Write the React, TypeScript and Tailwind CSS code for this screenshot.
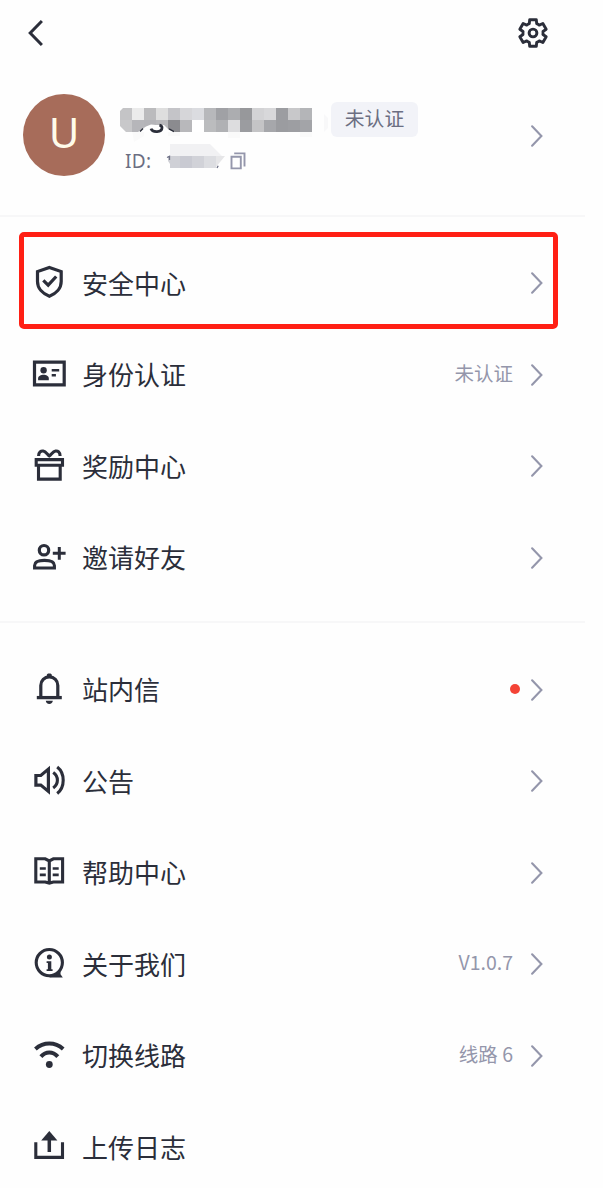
import type { ReactNode } from 'react';

const INK = '#2b2e3a';

function Glyph({ children }: { children: ReactNode }) {
  return (
    <svg width="36" height="36" viewBox="0 0 36 36" fill="none" stroke={INK} strokeWidth="3.2" className="block shrink-0">
      {children}
    </svg>
  );
}

const icons: Record<string, ReactNode> = {
  shield: (
    <>
      <path d="M18.4 2.4 30.2 6.6V16.5C30.2 23.5 25 28.8 18.4 31.2C11.8 28.8 6.5 23.5 6.5 16.5V6.6Z" />
      <path d="m12.3 15.3 4.9 4.8 8-8.6" />
    </>
  ),
  card: (
    <>
      <path d="M3.5 5.1H33.2V27.9H3.5Z" strokeWidth="3.2" />
      <circle cx="12.6" cy="13.2" r="3.2" fill={INK} stroke="none" />
      <path d="M7.1 23.2V21.4C7.1 19 10 17.8 12.6 17.8S17.8 19 17.8 21.4V23.2Z" fill={INK} stroke="none" />
      <path d="M20.7 13.2H28.2M20.7 18.2H24.9" strokeWidth="2.4" />
    </>
  ),
  gift: (
    <>
      <path d="M5.2 11.6H31.5V17.3H5.2Z" strokeWidth="3.1" />
      <path d="M7.5 17.4V31.1H29.2V17.4" strokeWidth="3.1" />
      <path d="M7.6 8C7.6 4.2 10 2.7 12.2 3C15 3.4 16.5 6.8 18.3 7.9C20.2 6.8 21.7 3.4 24.6 3C26.8 2.7 29.1 4.2 29.1 8" strokeWidth="3.1" />
    </>
  ),
  friend: (
    <>
      <circle cx="13" cy="10.2" r="4.7" />
      <path d="M3.6 28V25.4C3.6 21.7 8.5 20.4 13.4 20.4S23.4 21.7 23.4 25.4V28Z" strokeWidth="3.1" />
      <path d="M21.8 13.3H34.6M28.3 6.9V19.7" strokeWidth="3" />
    </>
  ),
  bell: (
    <>
      <path d="M9.8 25V13.4C9.8 8.5 13.4 4.9 18.3 4.9S26.8 8.5 26.8 13.4V25" />
      <path d="M5.8 25.6H30.8" strokeWidth="3.3" />
      <path d="M15.8 4.8V3C15.8 2 16.5 1.4 18.3 1.4S20.8 2 20.8 3V4.8Z" fill={INK} stroke="none" />
      <path d="M14.8 28.8H21.8C21.8 30.8 20.2 32 18.3 32S14.8 30.8 14.8 28.8Z" fill={INK} stroke="none" />
    </>
  ),
  speaker: (
    <>
      <path d="M4.9 12.5H9.8L17.4 6.1V28.4L9.8 22.1H4.9Z" strokeWidth="3.2" />
      <path d="M22.2 9.6C27.8 13.5 27.8 21 22.2 24.9M26.2 4C34.2 10.2 34.2 24.3 26.2 30.5" strokeWidth="3.1" />
    </>
  ),
  book: (
    <>
      <path d="M4.8 3.8H14.2L18.3 5.9L22.4 3.8H31.6V27H22.4L18.3 28.1L14.2 27H4.8ZM18.3 5.5V28.5" strokeWidth="3.1" />
      <path d="M8.8 13.5H14.8M8.8 19.8H14.8M21.7 13.5H27.7M21.7 19.8H27.7" strokeWidth="2.7" />
    </>
  ),
  info: (
    <>
      <circle cx="18.3" cy="16.6" r="13.1" strokeWidth="3.1" />
      <path d="M18 31.5H31.8L29.5 28.3V25.6L24.5 28.6Z" fill={INK} stroke="none" />
      <circle cx="18.4" cy="11" r="2.5" fill={INK} stroke="none" />
      <path d="M15.6 15.3H20.3V23.3H21.6V25H15.6V23.3H16.9V17H15.6Z" fill={INK} stroke="none" />
    </>
  ),
  wifi: (
    <>
      <path d="M4.4 10.9C12.6 3.6 24 3.6 32.2 10.9" strokeWidth="4" />
      <path d="M9.9 18.7C14.8 13.2 21.8 13.2 26.8 18.7" strokeWidth="4" />
      <circle cx="18.3" cy="26.5" r="3.4" fill={INK} stroke="none" />
    </>
  ),
  upload: (
    <>
      <path d="M4.8 13.3V28.4H31.5V13.3" strokeWidth="3.1" />
      <path d="M18.3 10V23" strokeWidth="3.5" />
      <path d="M18.3 2 26.4 11.4H10.2Z" fill={INK} stroke="none" />
    </>
  ),
};

function Chevron() {
  return (
    <svg width="16" height="24" viewBox="0 0 16 24" fill="none" stroke="#9496ab" strokeWidth="2.1" className="block shrink-0">
      <path d="M3.1 2.3 12.4 12 3.1 21.7" strokeLinecap="round" />
    </svg>
  );
}

const gearPath =
  Array.from({ length: 6 }, (_, k) => {
    const a = (k * Math.PI) / 3;
    const p = (x: number, y: number) =>
      `${(16 + x * Math.cos(a) - y * Math.sin(a)).toFixed(2)} ${(16 + x * Math.sin(a) + y * Math.cos(a)).toFixed(2)}`;
    return `${k ? 'L' : 'M'}${p(-3.7, -9.4)}L${p(-3.3, -13.3)}L${p(3.3, -13.3)}L${p(3.7, -9.4)}Q${p(5.1, -8.8)} ${p(6.2, -7.9)}`;
  }).join('') + 'Z';

type Item = { icon: string; label: string; note?: string; dot?: boolean; marked?: boolean; plain?: boolean };

function Row({ icon, label, note, dot, marked, plain }: Item) {
  return (
    <li className="relative flex h-[91.5px] items-center pl-[31px] pr-[40px]">
      <Glyph>{icons[icon]}</Glyph>
      <span className="relative -top-[0.5px] ml-[15px] text-[26px] leading-9 text-[#2b2e3a]">{label}</span>
      <span className="ml-auto flex items-center">
        {note && <span className="relative -top-[2px] mr-[16px] text-[19.5px] leading-7 text-[#9496ab]">{note}</span>}
        {dot && <span className="relative -top-px mr-[9px] size-[10px] rounded-full bg-[#f44336]" />}
        {!plain && <Chevron />}
      </span>
      {marked && (
        <span className="absolute left-[18.5px] top-[-6px] h-[97.5px] w-[539px] rounded-[5px] border-[5px] border-[#ff1f14]" />
      )}
    </li>
  );
}

const account: Item[] = [
  { icon: 'shield', label: '安全中心', marked: true },
  { icon: 'card', label: '身份认证', note: '未认证' },
  { icon: 'gift', label: '奖励中心' },
  { icon: 'friend', label: '邀请好友' },
];

const general: Item[] = [
  { icon: 'bell', label: '站内信', dot: true },
  { icon: 'speaker', label: '公告' },
  { icon: 'book', label: '帮助中心' },
  { icon: 'info', label: '关于我们', note: 'V1.0.7' },
  { icon: 'wifi', label: '切换线路', note: '线路 6' },
  { icon: 'upload', label: '上传日志', plain: true },
];

const nameTiles = [
  ['#c4c4c6', '#ebebeb', '#bbbbbd', '#dedede', '#c4c4c8', '#d6d6d9', '#dbdce0', '#b7b8bb', '#a0a1a5', '#acadb0', '#97989b', '#d3d3d5', '#d8d8da', '#9c9da1', '#c8c8ca', '#b4b5b8'],
  ['#c8c8ca', '#b6b6ba', '#b4b4b8', '#b9b9bc', '#8b8b8f', '#b8b8bb', '#ffffff', '#bbbcbe', '#b0b1b4', '#dddddf', '#9b9ca0', '#c4c4c6', '#a6a7ab', '#9b9ca0', '#9d9ea2', '#a3a4a8'],
];

function MaskedName() {
  return (
    <svg width="208" height="46" viewBox="0 0 208 46" className="block">
      <path d="M12 34H24V40L14 46ZM48 34H60V40H48ZM108 36H120V42H108ZM180 36H192V41H180Z" fill="#fafafa" />
      <path d="M204 18 208 22V32L204 36Z" fill="#f8f8f9" />
      {nameTiles.map((row, r) =>
        row.map((fill, c) => <rect key={`${r}-${c}`} x={c * 12} y={12 + r * 12} width="12" height="12" fill={fill} shapeRendering="crispEdges" />),
      )}
      <path d="M0 12H3L0 15ZM0 30 6 36H0Z" fill="#fff" />
      <path d="M18 36 26 30.5 31 28.5 36 29H44L48 33 55 36Z" fill="#fff" />
      <path d="M31 32.6C32.5 37 42 36.6 42 31.8C42 30.6 41.3 29.6 39.4 29.2" fill="none" stroke={INK} strokeWidth="2.8" />
      <path d="M20 35.5 23 32.5M49 32.8 54 35.6" fill="none" stroke={INK} strokeWidth="1.4" />
    </svg>
  );
}

function MaskedId() {
  return (
    <svg width="60" height="26" viewBox="0 0 60 26" className="block">
      <path d="M5 1H45L57 13H5Z" fill="#f1f1f3" />
      <path d="M3 13H15V25H5V21L3 18Z" fill="#cfd0d6" />
      <path d="M15 13H27V25H15Z" fill="#c9cad2" />
      <path d="M27 13H39V25H27Z" fill="#d1d2d8" />
      <path d="M39 13H51V25H39Z" fill="#dcdde1" />
      <path d="M51 13H60L51 24Z" fill="#e6e6e8" />
      <path d="M2 14.5 4.5 13.3V17M52 25 53.2 22.8" fill="none" stroke="#6d7085" strokeWidth="1.3" />
    </svg>
  );
}

export default function App() {
  return (
    <main className="h-[1188px] w-[603px] overflow-hidden bg-[#fefefe] font-['Noto_Sans_CJK_SC',sans-serif]">
      <div className="w-[585px]">
        <header className="flex h-[65px] items-center justify-between pl-[26px] pr-[36px]">
          <button aria-label="返回" className="block">
            <svg width="20" height="30" viewBox="0 0 20 30" fill="none" stroke={INK} strokeWidth="3">
              <path d="M15.9 3 4.2 15 15.9 27" />
            </svg>
          </button>
          <button aria-label="设置" className="block">
            <svg width="32" height="32" viewBox="0 0 32 32" fill="none" stroke={INK} strokeWidth="2.9" strokeLinejoin="round">
              <path d={gearPath} />
              <circle cx="16" cy="16" r="3.9" />
            </svg>
          </button>
        </header>

        <section className="flex h-[150px] items-start pl-[23px] pr-[40px] pt-[29px]">
          <div className="flex size-[82px] shrink-0 items-center justify-center rounded-full bg-[#a76c5a] font-['Noto_Sans',sans-serif] text-[42px] leading-none text-[#fffbea]">
            <span className="relative -top-[3px]">U</span>
          </div>
          <div className="ml-[15px] mt-[2px]">
            <div className="flex h-[46px] items-start">
              <MaskedName />
              <span className="ml-[3px] mt-[6px] flex h-[35px] w-[87px] items-center justify-center rounded-[6px] bg-[#f2f3f8] text-[19.8px] leading-none text-[#6b6e82]">
                <span className="relative -top-[1.5px]">未认证</span>
              </span>
            </div>
            <div className="mt-[6px] flex h-[26px] items-center pl-[5px]">
              <span className="w-[40px] whitespace-nowrap font-['Noto_Sans',sans-serif] text-[19px] leading-none tracking-[0.4px] text-[#6b6e82]">ID:</span>
              <div className="-mt-[10px]">
                <MaskedId />
              </div>
              <svg width="16" height="18" viewBox="0 0 16 18" fill="none" stroke="#9496ab" strokeWidth="1.9" className="ml-[5px] block">
                <path d="M1.5 4.7H10.8V16.4H1.5ZM4.2 1.4H14.5V14.6" />
              </svg>
            </div>
          </div>
          <div className="ml-auto mt-[30px]">
            <Chevron />
          </div>
        </section>

        <div className="h-[2px] bg-[#f7f7f8]" />
        <ul className="pt-[20.5px]">
          {account.map((item) => (
            <Row key={item.label} {...item} />
          ))}
        </ul>
        <div className="mt-[17.5px] h-[2px] bg-[#f7f7f8]" />
        <ul className="pt-[20.75px]">
          {general.map((item) => (
            <Row key={item.label} {...item} />
          ))}
        </ul>
      </div>
    </main>
  );
}
